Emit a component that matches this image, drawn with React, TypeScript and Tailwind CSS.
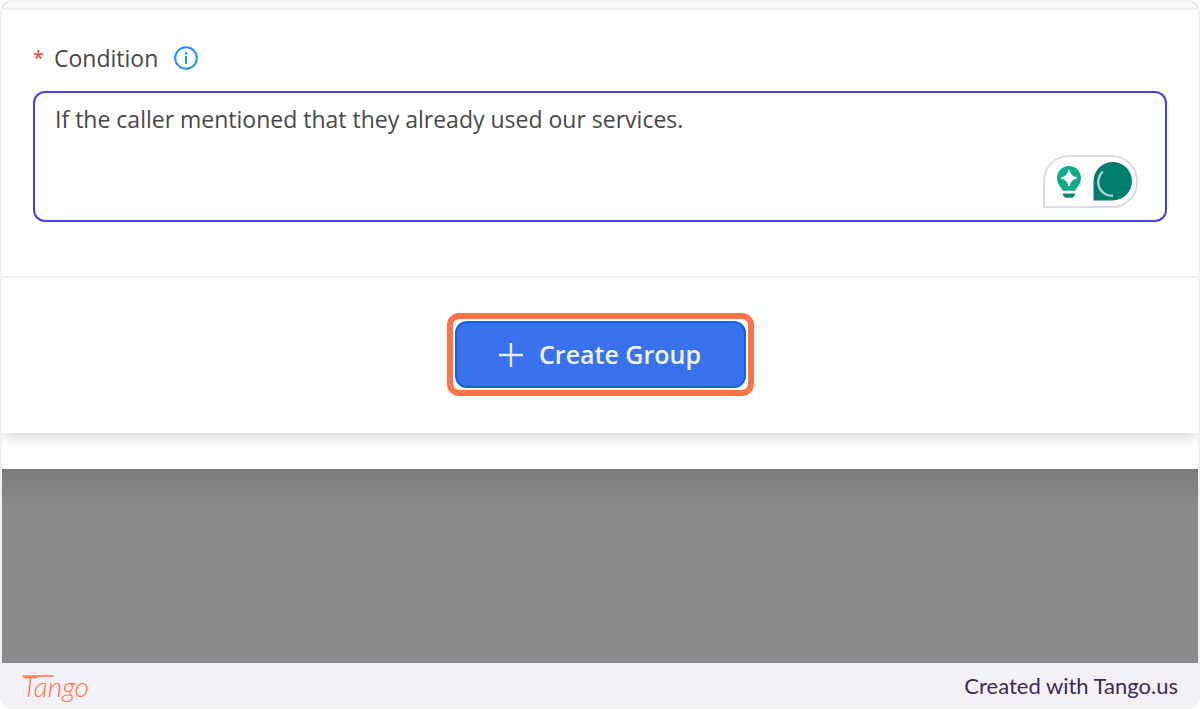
import { useState } from 'react';

const InfoIcon = () => (
  <svg className="h-6 w-6" viewBox="0 0 24 24" fill="none" stroke="#1e8fff" strokeWidth="2" aria-hidden="true">
    <circle cx="12" cy="12" r="10.8" />
    <path d="M12 10v8" />
    <path d="M12 6v2.4" />
  </svg>
);

const PlusIcon = () => (
  <svg className="h-6 w-6" viewBox="0 0 24 24" fill="none" stroke="#e6edfd" strokeWidth="2.4" aria-hidden="true">
    <path d="M12 0v24M0 12h24" />
  </svg>
);

const BulbIcon = () => (
  <svg className="h-8 w-6" viewBox="0 0 24 32" aria-hidden="true">
    <path d="M12 0C5.2 0 0 5.2 0 11.8c0 4.4 1.6 7.2 3.8 9.6.9 1 1.6 2 1.9 3.4h12.6c.3-1.4 1-2.4 1.9-3.4 2.2-2.4 3.8-5.2 3.8-9.6C24 5.2 18.8 0 12 0z" fill="#10ab88" />
    <path d="M12 4.8c1.3 4.6 2.6 5.9 7.2 7.2-4.6 1.3-5.9 2.6-7.2 7.2-1.3-4.6-2.6-5.9-7.2-7.2 4.6-1.3 5.900-2.6 7.2-7.2z" fill="#fff" stroke="#fff" strokeWidth="1.6" strokeLinejoin="round" />
    <path d="M5.7 27.4h12.6c-.3 2.7-2.2 4.4-4.2 4.4H9.9c-2.2 0-3.9-1.7-4.2-4.400z" fill="#078a70" />
  </svg>
);

const AssistantIcon = () => (
  <svg className="h-10 w-10" viewBox="0 0 40 40" aria-hidden="true">
    <path d="M.5 38.5V19.2a19.25 19.2 0 0 1 38.5 0 19.25 19.3 0 0 1-19.5 19.3z" fill="#027e6f" />
    <path d="M9.7 9.5C3.5 16.5 4 25 9.500 30c3 3 6.500 4 10.500 3.7" fill="none" stroke="#a9d6cf" strokeWidth="2.4" />
  </svg>
);

const App = () => {
  const [condition, setCondition] = useState('If the caller mentioned that they already used our services.');

  return (
    <div className="min-h-screen bg-white font-['Open_Sans',sans-serif]">
      <div className="flex min-h-screen flex-col rounded-xl bg-[#f3f1f7] px-0.5 pt-0.5">
        <main className="flex flex-1 flex-col overflow-hidden rounded-t-lg bg-[#8b8b8b]">
          <div className="relative z-10 h-2 border-b-2 border-[#eeeeef] bg-[#fafafa]" />

          {/* Modal body */}
          <div className="bg-white pb-9">
            <form onSubmit={(e) => e.preventDefault()} className="bg-white shadow-[0_4px_14px_rgba(0,0,0,0.16)]">
              <div className="border-b-2 border-[#f0f0f0] px-[31px] pt-8 pb-[54px]">
                <div className="flex h-8 items-center">
                  <label htmlFor="condition" className="flex items-center text-[23px] leading-8 text-[#484848]">
                    <span className="w-[21px] text-xl text-[#ff3030]">*</span>
                    Condition
                  </label>
                  <button type="button" aria-label="About the condition" className="ml-4">
                    <InfoIcon />
                  </button>
                </div>

                <div className="relative mt-[17px]">
                  <textarea
                    id="condition"
                    value={condition}
                    onChange={(e) => setCondition(e.target.value)}
                    className="block h-[131px] w-full resize-none rounded-xl border-2 border-[#4340f0] bg-white px-5 py-2.5 text-[23px] leading-8 text-[#484848] outline-none"
                  />
                  <div className="absolute right-[29px] bottom-3.5 flex h-[53px] w-[95px] items-center gap-3 rounded-[26px] rounded-bl-none border-2 border-[#dcdbe6] bg-white pl-3">
                    <BulbIcon />
                    <AssistantIcon />
                  </div>
                </div>
              </div>

              <div className="flex justify-center pt-[35px] pb-[37px]">
                <div className="rounded-xl border-6 border-[#ff7442] bg-white p-0.5">
                  <button
                    type="submit"
                    className="flex h-[67px] w-[291px] items-center justify-center gap-4 rounded-xl border-2 border-[#0f62f0] bg-[#3a72ee] text-[25px] font-semibold text-[#f0f4ff]"
                  >
                    <PlusIcon />
                    Create Group
                  </button>
                </div>
              </div>
            </form>
          </div>

          {/* Dimmed page behind the modal */}
          <div className="h-10 border-t-2 border-[#757575] bg-linear-to-b from-[#7d7d7d] to-[#8b8b8b]" />
        </main>

        <footer className="flex h-[46px] items-center justify-between px-5">
          <a href="#tango" className="relative font-['Lato',sans-serif] text-[28px] leading-8 font-light text-[#ff7442] italic">
            Tango
            <svg className="absolute top-0.5 left-0 h-2 w-8" viewBox="0 0 32 8" fill="none" stroke="#ff7442" strokeWidth="1.6" strokeLinecap="round" aria-hidden="true">
              <path d="M1 4h30" />
            </svg>
          </a>
          <p className="font-['Lato',sans-serif] text-[22px] leading-8 text-[#3f2b56]">Created with Tango.us</p>
        </footer>
      </div>
    </div>
  );
};

export default App;
